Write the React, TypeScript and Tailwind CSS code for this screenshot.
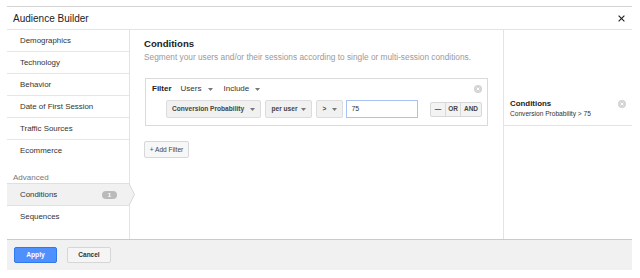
const font = { fontFamily: '"Liberation Sans", Arial, sans-serif' }

function Caret() {
  return (
    <svg className="w-[5px] h-[3px] shrink-0" viewBox="0 0 5 3">
      <path d="M0 0h5L2.5 3z" fill="#777" />
    </svg>
  )
}

function CircleX({ className = '' }: { className?: string }) {
  return (
    <svg className={`w-[8px] h-[8px] ${className}`} viewBox="0 0 8 8">
      <circle cx="4" cy="4" r="4" fill="#d4d4d4" />
      <path d="M2.6 2.6l2.8 2.8M5.4 2.6L2.6 5.4" stroke="#fff" strokeWidth="1" />
    </svg>
  )
}

function Select({ label, width }: { label: string; width: string }) {
  return (
    <div
      className={`${width} h-[18px] flex items-center justify-between pl-[5px] pr-[5px] bg-[#f1f1f1] border border-[#dcdcdc] rounded-[2px] text-[6.6px] font-bold text-[#444]`}
    >
      <span>{label}</span>
      <Caret />
    </div>
  )
}

const navTop = ['Demographics', 'Technology', 'Behavior', 'Date of First Session', 'Traffic Sources', 'Ecommerce']

export default function App() {
  return (
    <div className="w-[640px] h-[278px] bg-white pt-[6px] pl-[7px]" style={font}>
      <div className="w-[625px] border-t border-[#d4d4d4]">
        <div className="h-[23px] flex items-center justify-between pl-[6px] pr-[7px] border-b border-[#e3e3e3]">
          <span className="text-[10px] text-[#222]">Audience Builder</span>
          <svg className="w-[7px] h-[7px]" viewBox="0 0 7 7">
            <path d="M0.6 0.6l5.8 5.8M6.4 0.6l-5.8 5.8" stroke="#222" strokeWidth="1.15" />
          </svg>
        </div>

        <div className="flex h-[209px]">
          <div className="w-[123px] border-r border-[#e3e3e3] text-[7.9px] text-[#333]">
            {navTop.map((item, i) => (
              <div
                key={item}
                className={`h-[22px] flex items-center pl-[13px] ${i < navTop.length - 1 ? 'border-b border-[#e6e6e6]' : ''}`}
              >
                {item}
              </div>
            ))}
            <div className="h-[21px] pt-[11px] pl-[6px] leading-[10px] text-[8px] text-[#777]">Advanced</div>
            <div className="relative h-[23px] flex items-center justify-between pl-[13px] pr-[12px] bg-[#f1f1f1] border-y border-[#e0e0e0]">
              <span>Conditions</span>
              <span className="w-[15px] h-[8px] rounded-full bg-[#bababa] text-white text-[6px] font-bold leading-[8px] text-center">
                1
              </span>
              <svg className="absolute right-[-7px] top-[-1px] w-[7px] h-[23px]" viewBox="0 0 7 23">
                <path d="M0 0.5L5.5 11.5L0 22.5z" fill="#f1f1f1" />
                <path d="M0 0.5L5.5 11.5L0 22.5" fill="none" stroke="#d8d8d8" strokeWidth="1" />
              </svg>
            </div>
            <div className="h-[22px] flex items-center pl-[13px]">Sequences</div>
          </div>

          <div className="w-[374px] border-r border-[#e3e3e3] pt-[8px] pl-[14px] pr-[15px]">
            <div className="text-[9.6px] font-bold leading-[12px] text-[#222]">Conditions</div>
            <div className="mt-[2px] text-[8.3px] leading-[10px] text-[#9a9a9a] whitespace-nowrap">
              Segment your users and/or their sessions according to single or multi-session conditions.
            </div>

            <div className="mt-[16px] ml-[1px] h-[48px] border border-[#dadada] pl-[6px] pr-[5px] pt-[4px]">
              <div className="flex items-center h-[12px] text-[8px] text-[#333]">
                <span className="font-bold text-[#222]">Filter</span>
                <span className="ml-[9px]">Users</span>
                <span className="ml-[7px]">
                  <Caret />
                </span>
                <span className="ml-[10px]">Include</span>
                <span className="ml-[6px]">
                  <Caret />
                </span>
                <CircleX className="ml-auto" />
              </div>
              <div className="mt-[5px] ml-[14px] flex items-center">
                <Select label="Conversion Probability" width="w-[96px]" />
                <div className="ml-[4px]">
                  <Select label="per user" width="w-[47px]" />
                </div>
                <div className="ml-[4px]">
                  <Select label=">" width="w-[27px]" />
                </div>
                <div className="ml-[3px] w-[72px] h-[18px] border border-[#a9c1f3] flex items-center pl-[4px] text-[7px] text-[#333]">
                  75
                </div>
                <div className="ml-[12px] h-[15px] flex border border-[#d8d8d8] rounded-[2px] bg-[#f3f3f3] text-[6.5px] font-bold text-[#444]">
                  <span className="w-[15px] flex items-center justify-center border-r border-[#d8d8d8]">—</span>
                  <span className="w-[15px] flex items-center justify-center border-r border-[#d8d8d8]">OR</span>
                  <span className="w-[20px] flex items-center justify-center">AND</span>
                </div>
              </div>
            </div>

            <div className="mt-[15px] w-[45px] h-[17px] flex items-center justify-center border border-[#d8d8d8] rounded-[2px] bg-[#f7f7f7] text-[6.6px] text-[#444]">
              + Add Filter
            </div>
          </div>

          <div className="w-[128px] pt-[69px]">
            <div className="border-b border-[#e3e3e3] pl-[6px] pr-[6px] pb-[7px]">
              <div className="flex items-center justify-between">
                <span className="text-[7.9px] font-bold leading-[10px] text-[#222]">Conditions</span>
                <CircleX />
              </div>
              <div className="text-[6.6px] leading-[9px] text-[#333]">Conversion Probability &gt; 75</div>
            </div>
          </div>
        </div>

        <div className="h-[31px] bg-[#f1f1f1] border-t border-[#cacaca] flex items-start pt-[7px] pl-[7px] gap-[10px]">
          <div className="w-[43px] h-[16px] flex items-center justify-center rounded-[2px] bg-[#4d90fe] border border-[#3079ed] text-white text-[6.7px] font-bold">
            Apply
          </div>
          <div className="w-[44px] h-[16px] flex items-center justify-center rounded-[2px] bg-[#f5f5f5] border border-[#d6d6d6] text-[#333] text-[6.5px] font-bold">
            Cancel
          </div>
        </div>
      </div>
    </div>
  )
}
